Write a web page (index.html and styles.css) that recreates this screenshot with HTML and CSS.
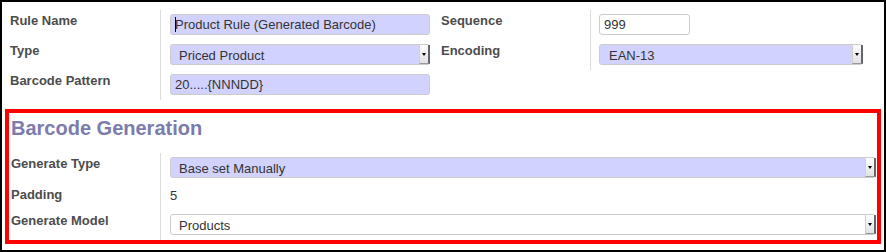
FILE: index.html
```html
<!DOCTYPE html>
<html lang="en">
<head>
  <meta charset="UTF-8" />
  <title>Barcode Rule</title>
  <link rel="stylesheet" href="styles.css">
</head>
<body>
  <div class="sheet">
    <div class="group top">
      <div class="label">Rule Name</div>
      <div class="field">
        <div class="input required"><span class="caret"></span>Product Rule (Generated Barcode)</div>
      </div>
      <div class="label">Sequence</div>
      <div class="field">
        <div class="input short">999</div>
      </div>

      <div class="label">Type</div>
      <div class="field">
        <div class="select required"><span>Priced Product</span><span class="arrow"></span></div>
      </div>
      <div class="label">Encoding</div>
      <div class="field">
        <div class="select required wide-pad"><span>EAN-13</span><span class="arrow"></span></div>
      </div>

      <div class="label">Barcode Pattern</div>
      <div class="field">
        <div class="input required">20.....{NNNDD}</div>
      </div>
    </div>

    <div class="generation">
      <h2>Barcode Generation</h2>
      <div class="group bottom">
        <div class="label">Generate Type</div>
        <div class="field">
          <div class="select required"><span>Base set Manually</span><span class="arrow"></span></div>
        </div>

        <div class="label short-row">Padding</div>
        <div class="field short-row">
          <div class="value">5</div>
        </div>

        <div class="label">Generate Model</div>
        <div class="field">
          <div class="select"><span>Products</span><span class="arrow"></span></div>
        </div>
      </div>
    </div>
  </div>
</body>
</html>
```

FILE: styles.css
```css
body {
  margin: 0;
  font-family: "Liberation Sans", Arial, sans-serif;
  font-size: 13px;
  color: #4c4c4c;
  background: #fff;
}

.sheet {
  width: 886px;
  height: 252px;
  box-sizing: border-box;
  border: 2px solid #000;
}

.group {
  display: grid;
}

.top {
  grid-template-columns: 151px 280px 150px 283px;
  grid-auto-rows: 30px;
  padding: 8px 0 0 8px;
}

.bottom {
  grid-template-columns: 150px 718px;
  grid-template-rows: 30px 27px 30px;
}

.label {
  box-sizing: border-box;
  border-right: 1px solid #ddd;
  padding-top: 3px;
  line-height: 15px;
  font-weight: bold;
}

.label.short-row {
  padding-top: 4px;
}

.field {
  box-sizing: border-box;
  padding: 4px 11px 0 9px;
}

.top .field:nth-child(4),
.top .field:nth-child(8) {
  padding-left: 8px;
}

.input,
.select {
  box-sizing: border-box;
  height: 21px;
  border: 1px solid #ccc;
  border-radius: 3px;
  line-height: 19px;
  color: #333;
  background: #fff;
}

.input {
  padding-left: 4px;
}

.input.short {
  width: 91px;
}

.required {
  background: #d2d2ff;
}

.caret {
  display: inline-block;
  width: 0;
  height: 15px;
  border-left: 1px solid #000;
  vertical-align: -3px;
  margin-right: -1px;
}

.select {
  display: flex;
  justify-content: space-between;
  align-items: center;
  padding-left: 8px;
}

.select span:first-child {
  padding-top: 2px;
}

.select.wide-pad {
  padding-left: 9px;
}

.arrow {
  position: relative;
  width: 11px;
  height: 19px;
  margin-right: -1px;
  background: linear-gradient(#fdfdfd, #e2e2e2);
  border-left: 1px solid #d0d0d0;
  border-right: 2px solid #666;
  border-bottom: 1px solid #999;
  box-sizing: border-box;
}

.arrow::after {
  content: "";
  position: absolute;
  left: 2px;
  top: 8px;
  border-left: 2.5px solid transparent;
  border-right: 2.5px solid transparent;
  border-top: 3px solid #000;
}

.value {
  padding-top: 1px;
  line-height: 15px;
  color: #333;
}

.generation {
  margin: 9px 3px 0 3px;
  height: 135px;
  box-sizing: border-box;
  border: 4px solid #ff0000;
  padding-left: 2px;
}

.generation h2 {
  margin: 3px 0 13px 0;
  font-size: 20px;
  line-height: 24px;
  color: #7c7bad;
}

.bottom .field {
  padding-right: 3px;
}
```
